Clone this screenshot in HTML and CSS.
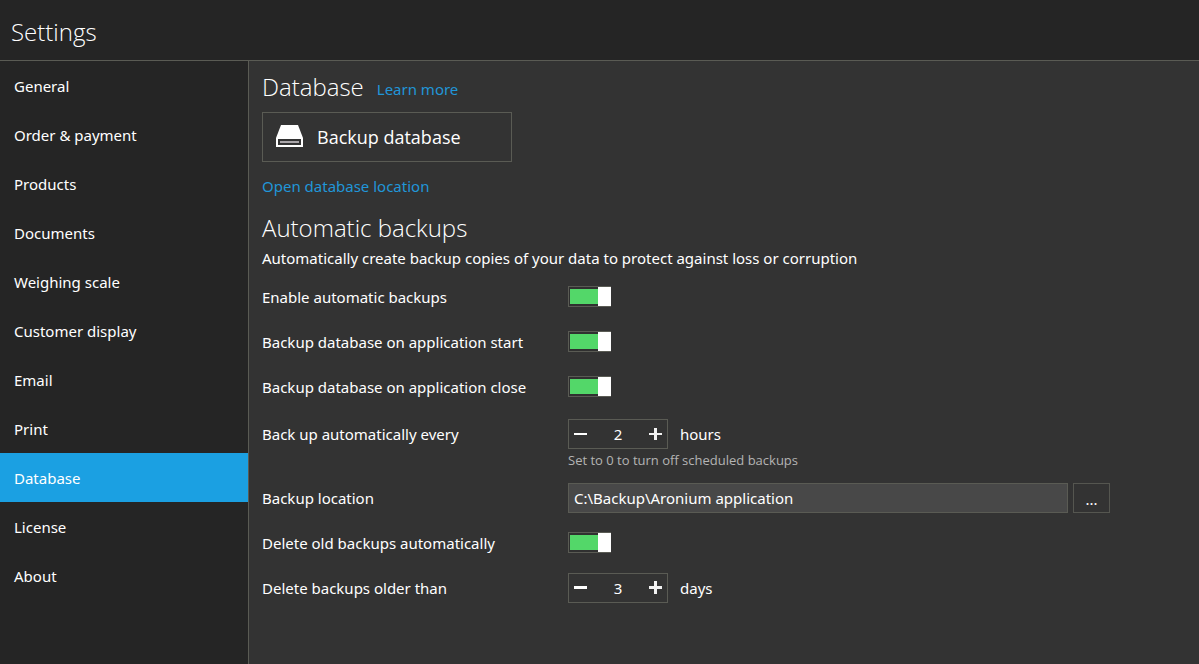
FILE: index.html
```html
<!DOCTYPE html>
<html lang="en">
<head>
<meta charset="utf-8">
<meta name="viewport" content="width=device-width, initial-scale=1">
<title>Settings</title>
<link rel="stylesheet" href="styles.css">
</head>
<body>
<header class="header"><h1 class="title">Settings</h1></header>
<div class="body">
  <nav class="sidebar" aria-label="Settings sections">
    <a class="nav-item" href="#general">General</a>
    <a class="nav-item" href="#order">Order &amp; payment</a>
    <a class="nav-item" href="#products">Products</a>
    <a class="nav-item" href="#documents">Documents</a>
    <a class="nav-item" href="#scale">Weighing scale</a>
    <a class="nav-item" href="#display">Customer display</a>
    <a class="nav-item" href="#email">Email</a>
    <a class="nav-item" href="#print">Print</a>
    <a class="nav-item active" href="#database" aria-current="page">Database</a>
    <a class="nav-item" href="#license">License</a>
    <a class="nav-item" href="#about">About</a>
  </nav>
  <main class="content">
    <div class="heading-row">
      <h2 class="heading">Database</h2>
      <a class="link" href="#learn">Learn more</a>
    </div>
    <button class="backup-button" type="button">
      <svg class="drive" viewBox="0 0 27 22" aria-hidden="true">
        <path d="M5 0H22L27 13V22H0V13Z" fill="#fff"/>
        <rect x="2" y="14" width="23" height="6" fill="#333"/>
        <rect x="4" y="16" width="19" height="2" fill="#aaa6aa"/>
      </svg>
      <span class="button-label">Backup database</span>
    </button>
    <div class="location-link"><a class="link" href="#open">Open database location</a></div>
    <h2 class="heading">Automatic backups</h2>
    <p class="description">Automatically create backup copies of your data to protect against loss or corruption</p>

    <div class="row">
      <label for="enable">Enable automatic backups</label>
      <input class="toggle" type="checkbox" role="switch" id="enable" checked>
    </div>
    <div class="row">
      <label for="on-start">Backup database on application start</label>
      <input class="toggle" type="checkbox" role="switch" id="on-start" checked>
    </div>
    <div class="row">
      <label for="on-close">Backup database on application close</label>
      <input class="toggle" type="checkbox" role="switch" id="on-close" checked>
    </div>
    <div class="row row-hint">
      <label for="interval">Back up automatically every</label>
      <div class="field">
        <div class="stepper">
          <button class="step" type="button" aria-label="Decrease hours"><svg class="sign" viewBox="0 0 13 13" aria-hidden="true"><path d="M0 5H13V7H0Z" fill="#fff"/></svg></button>
          <input class="number" id="interval" type="text" inputmode="numeric" value="2">
          <button class="step" type="button" aria-label="Increase hours"><svg class="sign" viewBox="0 0 13 13" aria-hidden="true"><path d="M0 5H5V0H8V5H13V7H8V12H5V7H0Z" fill="#f2f2f2"/></svg></button>
        </div>
        <span>hours</span>
      </div>
      <p class="hint">Set to 0 to turn off scheduled backups</p>
    </div>
    <div class="row">
      <label for="location">Backup location</label>
      <div class="path-field">
        <input class="path" id="location" type="text" value="C:\Backup\Aronium application">
        <button class="browse" type="button" aria-label="Browse">...</button>
      </div>
    </div>
    <div class="row">
      <label for="delete-old">Delete old backups automatically</label>
      <input class="toggle" type="checkbox" role="switch" id="delete-old" checked>
    </div>
    <div class="row">
      <label for="age">Delete backups older than</label>
      <div class="field">
        <div class="stepper">
          <button class="step" type="button" aria-label="Decrease days"><svg class="sign" viewBox="0 0 13 13" aria-hidden="true"><path d="M0 5H13V8H0Z" fill="#fff"/></svg></button>
          <input class="number" id="age" type="text" inputmode="numeric" value="3">
          <button class="step" type="button" aria-label="Increase days"><svg class="sign" viewBox="0 0 13 13" aria-hidden="true"><path d="M0 5H5V0H8V5H13V8H8V13H5V8H0Z" fill="#f2f2f2"/></svg></button>
        </div>
        <span>days</span>
      </div>
    </div>
  </main>
</div>
</body>
</html>
```

FILE: styles.css
```css
* { box-sizing: border-box; }
body {
  margin: 0;
  min-height: 100vh;
  display: flex;
  flex-direction: column;
  background: #333;
  color: #fff;
  font: 15px/20px "Noto Sans", "Open Sans", sans-serif;
}
button, input { font: inherit; color: inherit; margin: 0; border-radius: 0; }
h1, h2, p { margin: 0; }
.header {
  padding: 16px 11px 12px;
  background: #252525;
  border-bottom: 1px solid #5a5b54;
}
.title, .heading { font: 300 24px/28px "Open Sans", "Noto Sans", sans-serif; }
.title { line-height: 32px; }
.body { flex: 1; display: flex; }
.sidebar {
  flex: 0 0 249px;
  background: #252525;
  border-right: 1px solid #5a5b54;
}
.nav-item {
  display: flex;
  align-items: center;
  height: 49px;
  padding: 0 14px;
  color: #fff;
  text-decoration: none;
}
.active { background: #1ba0e2; }
.content { flex: 1; min-width: 0; padding: 12px 13px; }
.heading-row { display: flex; align-items: center; gap: 13px; }
.heading-row .link { padding-top: 4px; }
.link { color: #2196d8; text-decoration: none; }
.backup-button {
  display: flex;
  align-items: center;
  gap: 14px;
  width: 250px;
  height: 50px;
  margin-top: 11px;
  padding: 0 13px 2px;
  background: transparent;
  border: 1px solid #5a5b54;
  font: 18px/24px "Open Sans", "Noto Sans", sans-serif;
}
.button-label { padding-top: 2px; }
.drive { width: 27px; height: 22px; }
.location-link { margin: 14px 0 18px; }
.description { margin: 6px 0; }
.row {
  display: grid;
  grid-template-columns: 306px minmax(0, 1fr);
  align-items: center;
  min-height: 45px;
}
.row-hint { padding: 10px 0 4px; }
.hint {
  grid-column: 2;
  font: 13px/22px "Open Sans", "Noto Sans", sans-serif;
  color: #b4b4b4;
}
.field { display: flex; align-items: center; gap: 12px; }
.stepper {
  display: flex;
  width: 100px;
  height: 30px;
  border: 1px solid #5a5b54;
}
.step {
  display: flex;
  align-items: center;
  justify-content: center;
  width: 23px;
  padding: 0;
  background: none;
  border: 0;
}
.sign { width: 13px; height: 13px; }
.number {
  flex: 1;
  min-width: 0;
  padding: 0;
  text-align: center;
  background: none;
  border: 0;
}
.toggle {
  appearance: none;
  width: 43px;
  height: 21px;
  border: 1px solid #5a5b54;
  border-right: 0;
  background:
    linear-gradient(#fff, #fff) right / 13px 100% no-repeat border-box,
    linear-gradient(#53d769, #53d769) 1px 2px / 29px 15px no-repeat padding-box,
    #303030;
}
.toggle:not(:checked) {
  background: linear-gradient(#fff, #fff) left / 13px 100% no-repeat border-box, #303030;
}
.path-field { display: flex; gap: 5px; }
.path {
  flex: 0 1 500px;
  min-width: 0;
  height: 30px;
  padding: 0 5px;
  background: #484848;
  border: 1px solid #5a5b54;
}
.browse {
  width: 37px;
  height: 30px;
  padding: 2px 0 0;
  background: transparent;
  border: 1px solid #555650;
}
```
